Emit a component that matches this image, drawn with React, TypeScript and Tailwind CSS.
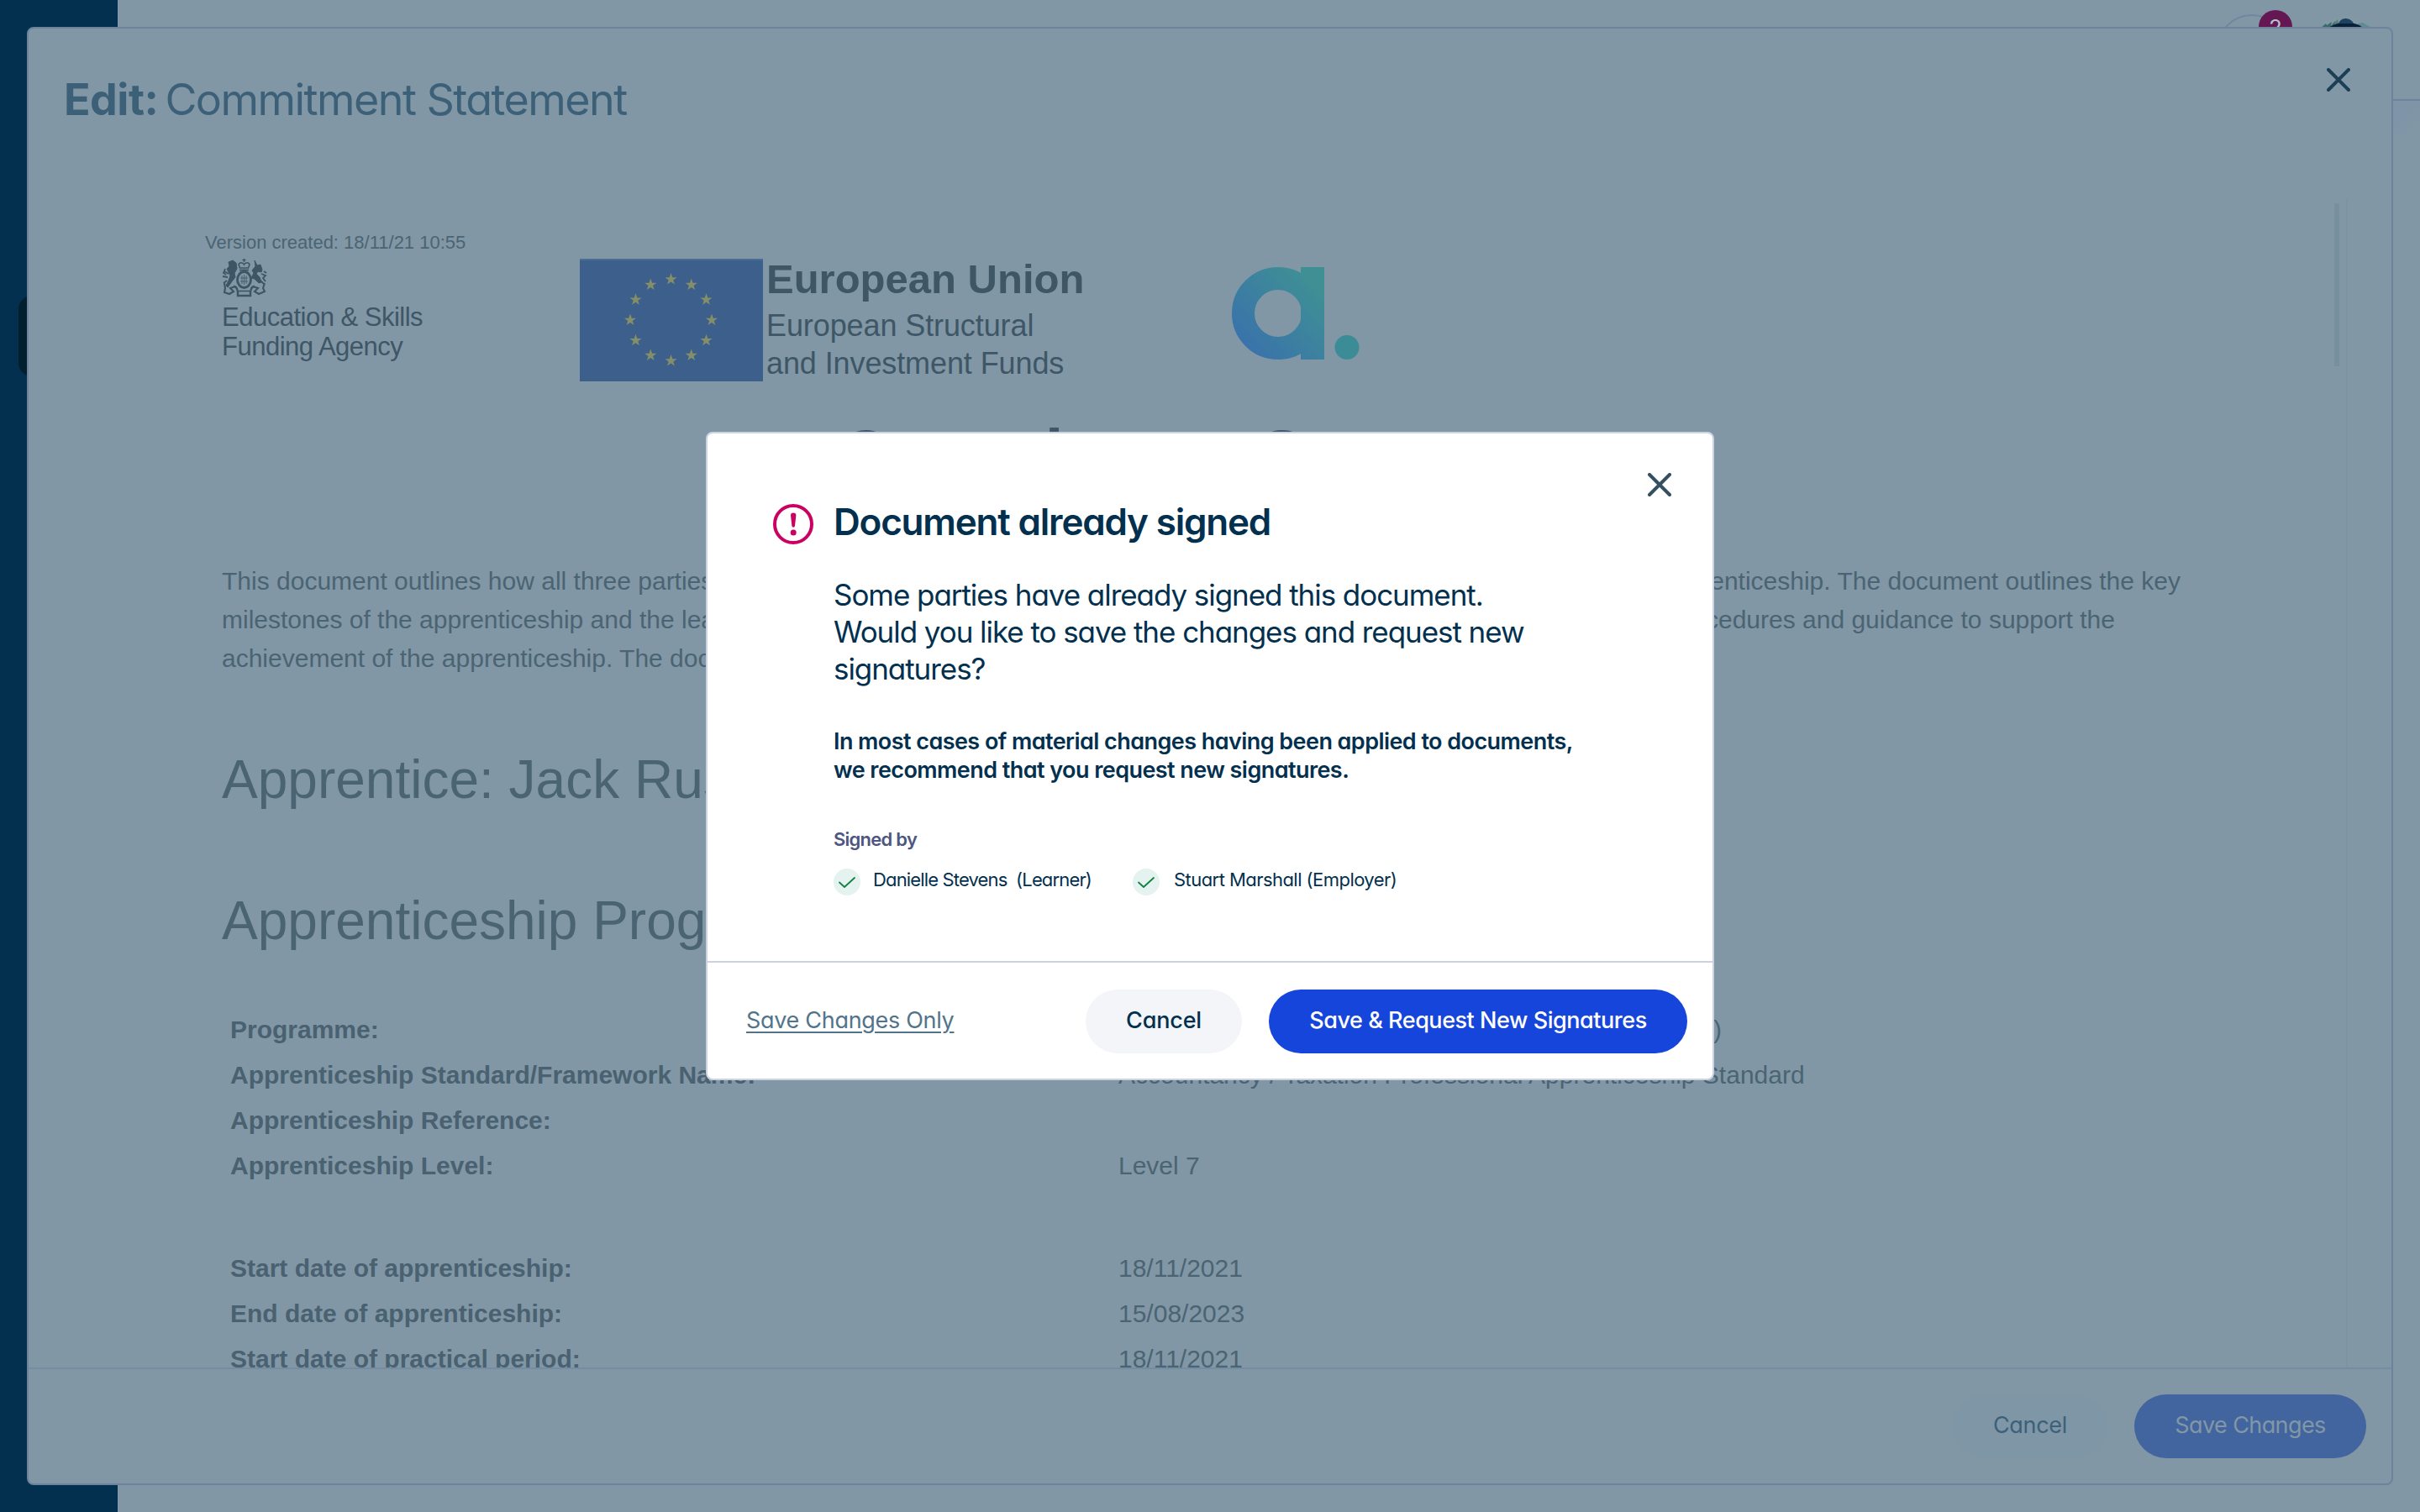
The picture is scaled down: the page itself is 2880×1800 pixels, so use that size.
const SIGNATORIES = [
  { name: 'Danielle Stevens\u00a0', role: 'Learner', text: 'tracking-[-0.85px]' },
  { name: 'Stuart Marshall', role: 'Employer', text: 'pl-0.5 tracking-[-0.55px]' },
];

const PROGRAMME_ROWS = [
  ['Programme:', 'Accountancy / Taxation Professional (Level 7)'],
  ['Apprenticeship Standard/Framework Name:', 'Accountancy / Taxation Professional Apprenticeship Standard'],
  ['Apprenticeship Reference:', ''],
  ['Apprenticeship Level:', 'Level 7'],
];

const DATE_ROWS = [
  ['Start date of apprenticeship:', '18/11/2021'],
  ['End date of apprenticeship:', '15/08/2023'],
  ['Start date of practical period:', '18/11/2021'],
];

const STAR = '0,-7.5 1.8,-2.3 7.1,-2.3 2.8,0.9 4.4,6.1 0,2.9 -4.4,6.1 -2.8,0.9 -7.1,-2.3 -1.8,-2.3';

function CloseIcon({ className }: { className: string }) {
  return (
    <svg viewBox="0 0 28 28" className={className} fill="none" stroke="currentColor" strokeWidth="4" strokeLinecap="round">
      <path d="M2 2l24 24M26 2L2 26" />
    </svg>
  );
}

function AlertIcon() {
  return (
    <svg viewBox="0 0 48 48" className="mt-[7px] size-12 shrink-0 text-[#cc0060]">
      <circle cx="24" cy="24" r="22" fill="none" stroke="currentColor" strokeWidth="4" />
      <path d="M21 13.6a3.2 3.2 0 0 1 6.4 0L26 26a1.8 1.8 0 0 1-3.6 0z" fill="currentColor" />
      <circle cx="24.2" cy="34" r="3.5" fill="currentColor" />
    </svg>
  );
}

function TickIcon() {
  return (
    <svg viewBox="0 0 32 32" className="size-8 shrink-0" fill="none">
      <circle cx="16" cy="16" r="16" fill="#e4f2f0" />
      <path d="M7 16.5l6 5.5L25 11" stroke="#148040" strokeWidth="1.8" strokeLinecap="round" strokeLinejoin="round" />
    </svg>
  );
}

function Crest() {
  return (
    <svg viewBox="0 0 54 46" className="h-[46px] w-[54px] text-[#3d5565]" fill="none" stroke="currentColor">
      {/* crown */}
      <path d="M26.5 0v4M24.5 1.5h4" strokeWidth="1.3" />
      <path d="M20 7c1-3 5-3 6.5 0 1.5-3 5.5-3 6.5 0l-1.5 4h-10z" strokeWidth="1.6" />
      <path d="M21 13.5h11" strokeWidth="1.8" />
      {/* garter and shield */}
      <ellipse cx="26.5" cy="25" rx="8" ry="9.5" strokeWidth="2.8" />
      <path d="M24 20v10M26.5 19v12M29 20v10M22 23h9M22 27h9" strokeWidth="1" opacity="0.8" />
      {/* lion */}
      <path d="M8 4l5-2 4 3 1 7-3 5 1 5-4 5-2 3-3 4-2-2 3-6 2-6-2-4-2-4 3-3z" fill="currentColor" strokeWidth="1" />
      <path d="M8 18l-5-3M7 22l-6-1M6 26l-4 3M4 12l-2 5 3 2" strokeWidth="1.8" />
      {/* unicorn */}
      <path d="M39 2l3 6 4-1 2 6-1 3-4-1-2 3 4 4 2 6-3 1-5-5-4-1 3-6-2-3 4-5z" fill="currentColor" strokeWidth="1" />
      <path d="M47 18l5 2-3 3 3 4M45 25l5 5M50 15l3 2" strokeWidth="1.8" />
      {/* compartment and scroll */}
      <path d="M3 29l1 6-1 5 6 2 5-3-4-4 6-2M51 29l-2 6 2 4-7 3-5-3 4-4-6-2" strokeWidth="2.1" />
      <path d="M14 33c5 0 4 5 5 6v5h15v-5c1-1 0-6 5-6" strokeWidth="2.4" />
      <path d="M20 38.5h13" strokeWidth="1.6" />
    </svg>
  );
}

function EuFlag() {
  return (
    <svg viewBox="0 0 218 146" className="h-[146px] w-[218px] shrink-0">
      <rect width="218" height="146" fill="#3d5f8b" />
      <rect width="218" height="2" fill="#4b6c95" />
      <g fill="#848f69">
        {Array.from({ length: 12 }, (_, i) => {
          const a = (i * Math.PI) / 6;
          return <polygon key={i} points={STAR} transform={`translate(${108.5 + 48.5 * Math.sin(a)} ${73 - 48.5 * Math.cos(a)})`} />;
        })}
      </g>
    </svg>
  );
}

function BrandMark() {
  return (
    <svg viewBox="0 0 152 110" className="mt-2.5 h-[110px] w-[152px] shrink-0">
      <defs>
        <linearGradient id="brand" gradientUnits="userSpaceOnUse" x1="20" y1="95" x2="100" y2="20">
          <stop offset="0" stopColor="#3a73aa" />
          <stop offset="1" stopColor="#3f9094" />
        </linearGradient>
      </defs>
      <circle cx="55" cy="55" r="41.5" fill="none" stroke="url(#brand)" strokeWidth="27" />
      <path d="M82 0h28v110H82z" fill="url(#brand)" />
      <circle cx="137" cy="95.5" r="14.5" fill="#3c8c98" />
    </svg>
  );
}

function Avatar() {
  return (
    <svg viewBox="0 0 80 80" className="size-20">
      <clipPath id="avatar"><circle cx="40" cy="40" r="40" /></clipPath>
      <g clipPath="url(#avatar)">
        <rect width="80" height="80" fill="#8299a5" />
        <path d="M8 16l8-7 1 2 6-4-1 5 5-6-1 8-6 6H8z" fill="#3b6a6b" />
        <path d="M27 7l3-3 1 5-5 5z" fill="#55807d" />
        <path d="M54 9l6-1 14 8-2 4H58z" fill="#5f8b92" />
        <path d="M20 14c8-8 32-8 40 0v20H20z" fill="#0a2238" />
        <path d="M31 9c3-8 14-8 18 0z" fill="#1d4262" />
      </g>
    </svg>
  );
}

function DetailRow({ label, value }: { label: string; value: string }) {
  return (
    <div className="flex h-[54px] items-center pl-2.5">
      <span className="w-[1057px] shrink-0 font-bold text-[#496170]">{label}</span>
      <span className={value.endsWith(')') ? 'w-[718px] text-right' : ''}>{value}</span>
    </div>
  );
}

function CommitmentDocument() {
  return (
    <div className="h-[1392px] overflow-hidden pl-[230px] pt-[37px] font-['Liberation_Sans',Arial,sans-serif] text-[30px] whitespace-nowrap text-[#4b6473]">
      <p className="-ml-5 text-[22px] leading-8">Version created: 18/11/21 10:55</p>

      <div className="mt-[3px] flex h-[146px] items-start text-[#3e5666]">
        <div className="w-[426px] shrink-0">
          <Crest />
          <p className="mt-1.5 text-[31px] leading-[35px] tracking-[-0.5px]">Education &amp; Skills<br />Funding Agency</p>
        </div>
        <EuFlag />
        <div className="-mt-0.5 w-[558px] shrink-0 pl-1">
          <p className="text-[49px] leading-[52px] font-bold">European Union</p>
          <p className="mt-[7px] text-[36px] leading-[45px] tracking-[-0.1px]">European Structural<br />and Investment Funds</p>
        </div>
        <BrandMark />
      </div>

      <h1 className="mt-10 ml-[737px] text-[78px] leading-[90px] font-bold text-[#3e5666]">Commitment Statement</h1>

      <div className="mt-[85px] leading-[46px]">
        <p className="flex w-[2331px] justify-between">
          <span>This document outlines how all three parties</span>
          <span>apprenticeship. The document outlines the key</span>
        </p>
        <p className="flex w-[2253px] justify-between">
          <span>milestones of the apprenticeship and the learning</span>
          <span>procedures and guidance to support the</span>
        </p>
        <p>achievement of the apprenticeship. The document</p>
      </div>

      <h2 className="mt-[83px] text-[64px] leading-[76px]">Apprentice: Jack Russell</h2>
      <h2 className="mt-[92px] text-[64px] leading-[76px]">Apprenticeship Programme</h2>

      <div className="mt-16">
        {PROGRAMME_ROWS.map(([label, value]) => <DetailRow key={label} label={label} value={value} />)}
      </div>
      <div className="mt-[68px]">
        {DATE_ROWS.map(([label, value]) => <DetailRow key={label} label={label} value={value} />)}
      </div>
    </div>
  );
}

function AppShell() {
  return (
    <div className="flex h-full">
      <aside className="relative w-[140px] shrink-0 bg-[#02304e]">
        <div className="absolute top-[352px] left-[22px] h-[96px] w-[96px] rounded-[16px] bg-[#021f2f]" />
      </aside>
      <div className="grow">
        <header className="flex h-[120px] items-center justify-end gap-8 border-b-2 border-[#6b849b] pr-12">
          <div className="relative -mr-0.5 size-[84px] rounded-full border-2 border-[#6f88a0]">
            <span className="absolute -top-[7px] left-[48px] flex size-10 items-center justify-center rounded-full bg-[#651754] text-[26px] text-[#b9c3cf]">2</span>
          </div>
          <Avatar />
        </header>
        <div className="ml-auto h-10 w-8 bg-linear-to-br from-[#7e93a8] to-[#8197a5]" />
      </div>
    </div>
  );
}

function EditPanel() {
  return (
    <section className="absolute inset-8 flex flex-col overflow-hidden rounded-lg border-2 border-[#6b849b] bg-[#8197a5]">
      <div className="flex h-[202px] shrink-0 justify-between pt-[47px] pr-[49px] pl-[42px]">
        <h1 className="flex h-[76px] items-center text-[52px] text-[#3d6079]">
          <b className="mr-2 font-bold tracking-[-0.5px]">Edit:</b>
          <span className="font-[370] tracking-[-1.55px]">Commitment Statement</span>
        </h1>
        <CloseIcon className="size-7 text-[#1d3f56]" />
      </div>
      <div className="relative">
        <CommitmentDocument />
        <div className="absolute top-0 right-[52px] h-full w-0.5 bg-[#7d94a3]" />
        <div className="absolute top-1.5 right-[62px] h-[194px] w-1.5 bg-[#788f9d]" />
      </div>
      <footer className="flex grow items-center justify-end gap-8 border-t-2 border-[#758da2] pr-[30px] text-[27px]">
        <button className="h-[76px] w-[184px] rounded-full bg-[#7e96a6] pb-0.5 tracking-[-0.3px] text-[#3d6079]">Cancel</button>
        <button className="h-[76px] w-[276px] rounded-full bg-[#42659f] pb-0.5 tracking-[-0.6px] text-[#8197a5]">Save Changes</button>
      </footer>
    </section>
  );
}

function SignedDialog() {
  return (
    <div className="absolute inset-0 flex items-center justify-center">
      <div role="dialog" className="relative flex h-[772px] w-[1200px] flex-col rounded-lg border-2 border-[#cbd2e2] bg-white whitespace-nowrap text-[#02304e]">
        <button className="absolute top-[47px] right-[49px]"><CloseIcon className="size-7 text-[#344f60]" /></button>

        <div className="flex h-[628px] gap-6 pt-[77px] pl-[78px]">
          <AlertIcon />
          <div>
            <h2 className="text-[44px] leading-[56px] font-semibold tracking-[-1.2px]">Document already signed</h2>
            <p className="mt-[37px] text-[35px] leading-[44px] tracking-[-1.06px]">
              Some parties have already signed this document.<br />
              Would you like to save the changes and request new<br />
              signatures?
            </p>
            <p className="mt-12 text-[27px] leading-[34px] font-semibold tracking-[-0.56px]">
              In most cases of material changes having been applied to documents,<br />
              we recommend that you request new signatures.
            </p>
            <p className="mt-[50px] text-[22px] leading-[30px] font-semibold tracking-[-0.75px] text-[#4d5680]">Signed by</p>
            <ul className="mt-5 flex text-[22px]">
              {SIGNATORIES.map(s => (
                <li key={s.name} className="flex h-8 w-[356px] items-center gap-[15px]">
                  <TickIcon />
                  <span className={`pb-1.5 ${s.text}`}>{s.name} ({s.role})</span>
                </li>
              ))}
            </ul>
          </div>
        </div>

        <footer className="flex grow items-center border-t-2 border-[#cbd2e2] pt-0.5 pr-[30px] pl-[46px] text-[27px]">
          <a className="mr-auto pb-0.5 tracking-[-0.3px] text-[#52748a] underline underline-offset-4">Save Changes Only</a>
          <button className="h-[76px] w-[186px] rounded-full bg-[#f3f5f9] pb-0.5 font-medium tracking-[-0.2px]">Cancel</button>
          <button className="ml-8 h-[76px] w-[498px] rounded-full bg-[#1645dc] pb-0.5 font-medium tracking-[-0.46px] text-white">Save &amp; Request New Signatures</button>
        </footer>
      </div>
    </div>
  );
}

export default function App() {
  return (
    <main className="relative h-[1800px] w-[2880px] overflow-hidden bg-[#8197a5] font-['Inter',sans-serif] [font-feature-settings:'cv11']">
      <AppShell />
      <EditPanel />
      <SignedDialog />
    </main>
  );
}
